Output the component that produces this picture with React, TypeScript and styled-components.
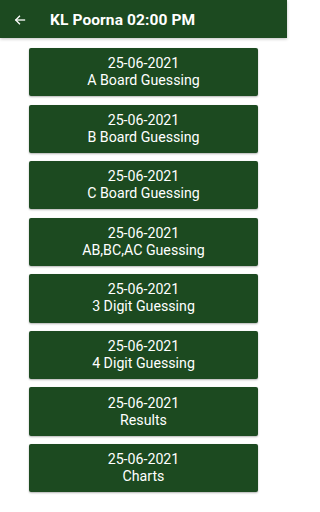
import React from "react";
import styled, { createGlobalStyle } from "styled-components";

const GlobalStyle = createGlobalStyle`
  html, body {
    margin: 0;
    padding: 0;
    background: #ffffff;
    font-family: Roboto, "Liberation Sans", sans-serif;
  }
`;

const Page = styled.div`
  width: 287px;
  min-height: 512px;
  background: #ffffff;
`;

const TopBar = styled.header`
  height: 38px;
  background: #1c4a20;
  display: flex;
  align-items: center;
  padding-left: 13px;
  padding-top: 2px;
  box-sizing: border-box;
  box-shadow: 0 1px 3px rgba(0, 0, 0, 0.25);
`;

const BackButton = styled.button`
  border: none;
  background: transparent;
  padding: 0;
  width: 14px;
  height: 14px;
  display: flex;
  align-items: center;
  justify-content: center;
  color: #ffffff;
  margin-right: 23px;
`;

const Title = styled.h1`
  margin: 0;
  color: #ffffff;
  font-size: 15.5px;
  font-weight: 700;
  letter-spacing: 0.1px;
`;

const List = styled.main`
  display: flex;
  flex-direction: column;
  align-items: center;
  gap: 8.4px;
  padding-top: 10px;
`;

const MenuButton = styled.button`
  width: 229px;
  height: 48.2px;
  border: none;
  border-radius: 2px;
  background: #1c4a20;
  color: #ffffff;
  font-family: Roboto, "Liberation Sans", sans-serif;
  font-size: 14.2px;
  line-height: 17px;
  display: flex;
  flex-direction: column;
  align-items: center;
  justify-content: center;
  box-shadow: 0 1px 2px rgba(0, 0, 0, 0.3);
`;

const items = [
  "A Board Guessing",
  "B Board Guessing",
  "C Board Guessing",
  "AB,BC,AC Guessing",
  "3 Digit Guessing",
  "4 Digit Guessing",
  "Results",
  "Charts",
];

const App = () => {
  return (
    <Page>
      <GlobalStyle />
      <TopBar>
        <BackButton aria-label="back">
          <svg width="12" height="12" viewBox="0 0 24 24" fill="none" stroke="#fff" strokeWidth="2.6" strokeLinecap="square">
            <path d="M21 12H4" />
            <path d="M11 4.5L3.5 12L11 19.5" />
          </svg>
        </BackButton>
        <Title>KL Poorna 02:00 PM</Title>
      </TopBar>
      <List>
        {items.map((label) => (
          <MenuButton key={label}>
            <span>25-06-2021</span>
            <span>{label}</span>
          </MenuButton>
        ))}
      </List>
    </Page>
  );
};

export default App;
